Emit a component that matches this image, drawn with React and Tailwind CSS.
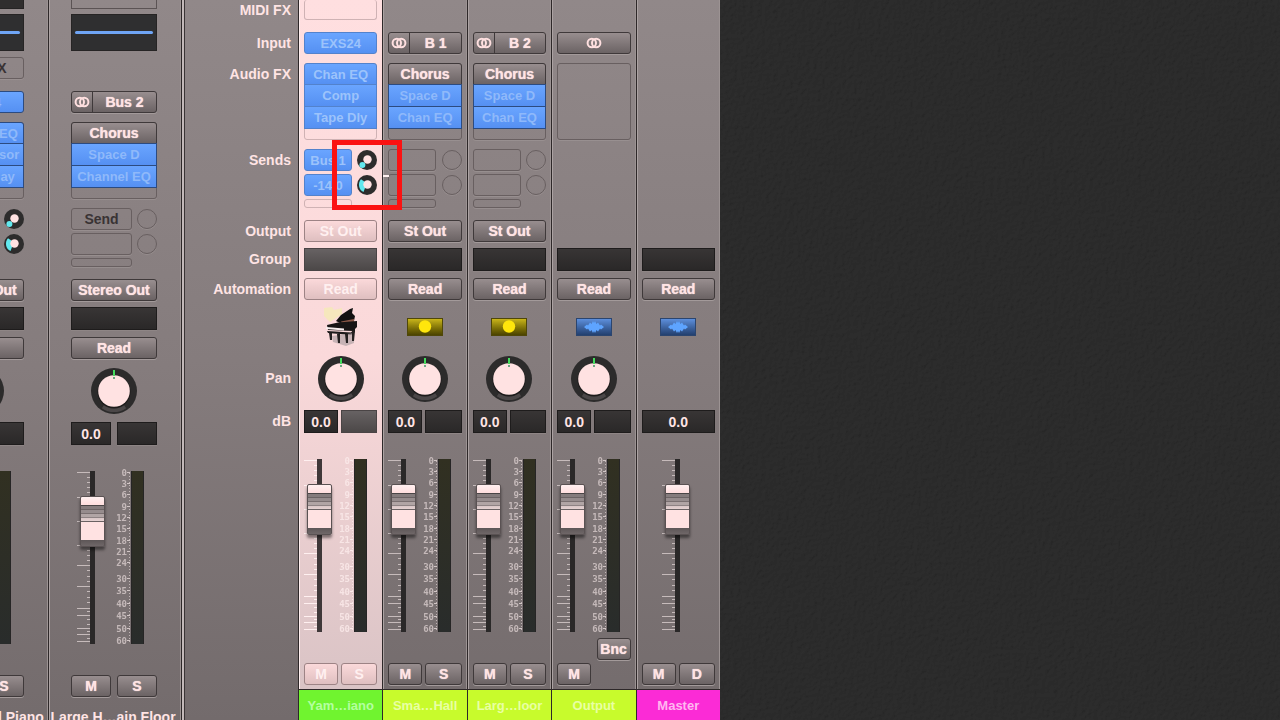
import clsx from 'clsx';

// --- DATA ---
const METER_MARKS = [
  ['0', 2], ['3', 13], ['6', 24], ['9', 36], ['12', 47], ['15', 58], ['18', 70], ['21', 81],
  ['24', 92], ['30', 108], ['35', 120], ['40', 133], ['45', 145], ['50', 158], ['60', 170],
];
const FADER_TICKS = [2, 27, 51, 75, 95, 116, 138, 145, 158, 164, 171];
const FADER_MINOR = [7, 12, 17, 22, 32, 37, 41, 46, 56, 61, 65, 70, 80, 85, 90, 100, 106, 111, 121, 127, 132, 141, 149, 154, 161, 168];

const SESSION = [
  {
    id: 'a1', wide: true, name: 'Yamaha G…l Piano', display: 'dark', midi: 'MIDI FX', input: 'EXS24', instrument: true,
    fx: ['Channel EQ', 'Compressor', 'Tape Delay'], sends: [{ label: 'Bus 1', amount: 1 }, { label: 'Bus 2', amount: 2 }],
    output: 'Stereo Out', pan: true, solo: 'S',
  },
  {
    id: 'a2', wide: true, name: 'Large H…ain Floor', input: 'Bus 2', stereo: true,
    fx: ['Chorus', 'Space D', 'Channel EQ'], firstPlain: true, sends: [{ label: 'Send' }, { label: '' }],
    output: 'Stereo Out', pan: true, solo: 'S',
  },
];

const MIXER = [
  {
    id: 'piano', name: 'Yam…iano', selected: true, midi: '', input: 'EXS24', instrument: true,
    fx: ['Chan EQ', 'Comp', 'Tape Dly'], sends: [{ label: 'Bus 1', amount: 1 }, { label: '-14.0', amount: 2 }],
    output: 'St Out', icon: 'piano', pan: true, solo: 'S', color: 'bg-[#70f42f]', nameColor: 'text-[#b4ffa0]', callout: true,
  },
  {
    id: 'hall', name: 'Sma…Hall', input: 'B 1', stereo: true, fx: ['Chorus', 'Space D', 'Chan EQ'], firstPlain: true,
    sends: [{ label: '' }, { label: '' }], output: 'St Out', icon: 'aux', pan: true, solo: 'S',
    color: 'bg-[#c8fb2c]', nameColor: 'text-[#e8ffa4]',
  },
  {
    id: 'floor', name: 'Larg…loor', input: 'B 2', stereo: true, fx: ['Chorus', 'Space D', 'Chan EQ'], firstPlain: true,
    sends: [{ label: '' }, { label: '' }], output: 'St Out', icon: 'aux', pan: true, solo: 'S',
    color: 'bg-[#c8fb2c]', nameColor: 'text-[#e8ffa4]',
  },
  {
    id: 'output', name: 'Output', input: '', stereo: true, fx: [], icon: 'wave', pan: true, bounce: true,
    color: 'bg-[#c8fb2c]', nameColor: 'text-[#e8ffa4]',
  },
  { id: 'master', name: 'Master', icon: 'wave', master: true, solo: 'D', color: 'bg-[#fb2bd6]', nameColor: 'text-[#ffb8f0]' },
];

// --- SMALL PARTS ---
function StereoIcon() {
  return (
    <svg width="16" height="12" viewBox="0 0 16 12" fill="none" stroke="#ffe0e0" strokeWidth="2">
      <circle cx="5.8" cy="6" r="4.2" />
      <circle cx="10.2" cy="6" r="4.2" />
    </svg>
  );
}

function PushButton({ selected, className, children, ...rest }) {
  return (
    <button
      type="button"
      className={clsx(
        'flex h-[22px] items-center justify-center overflow-hidden whitespace-nowrap rounded-[3px] border bg-gradient-to-b text-[14px] font-bold leading-none',
        selected
          ? 'border-[#9d8385] from-[#fbd9da] to-[#dfbfc0] text-[#fff0f0]'
          : 'border-[#3f393a] from-[#988e8f] to-[#6b6364] text-[#ffe4e4] shadow-[0_1px_0_#a39a9a] [text-shadow:0_0_1px_#ffe4e4]',
        className,
      )}
      {...rest}
    >
      {children}
    </button>
  );
}

function EmptySlot({ selected, className, children }) {
  return (
    <div
      className={clsx(
        'rounded-[3px] border',
        selected ? 'border-[#cfb2b4]' : 'border-[#685f60] shadow-[0_1px_0_#a0979799]',
        className,
      )}
    >
      {children}
    </div>
  );
}

function BlueButton({ selected, className, children }) {
  return (
    <button
      type="button"
      className={clsx(
        'flex items-center justify-center overflow-hidden whitespace-nowrap border bg-gradient-to-b from-[#6aa5ff] to-[#5590f2] text-[13px] font-bold leading-none',
        selected ? 'border-[#5382cc] text-[#9cc3fb]' : 'border-[#2c4b80] text-[#8fb9fa]',
        className,
      )}
    >
      {children}
    </button>
  );
}

function SendKnob({ amount, label }) {
  if (!amount) {
    return <div className="size-5 rounded-full border border-[#685f60] shadow-[0_1px_0_#a0979799]" />;
  }
  return (
    <label className="relative block size-5">
      <svg width="20" height="20" viewBox="0 0 20 20">
        <circle cx="10" cy="10" r="10" fill="#2d2c2c" />
        {amount === 1 ? (
          <circle cx="5.4" cy="15" r="3" fill="#62e8ee" />
        ) : (
          <path d="M6.5 17 C1.5 15 0.5 8 4 4.2 L8 7 L8 13 Z" fill="#62e8ee" />
        )}
        <circle cx="10.5" cy="9.5" r="4.2" fill="#ffe2e2" />
      </svg>
      <input type="range" aria-label={`${label} send level`} defaultValue={amount * 20} className="absolute inset-0 size-5 opacity-0" />
    </label>
  );
}

function PanKnob({ name }) {
  return (
    <label className="relative block size-[46px]">
      <svg width="46" height="46" viewBox="0 0 46 46">
        <circle cx="23" cy="23" r="23" fill="#2c2b2b" />
        <path d="M12 38.5 A19 19 0 0 0 34 38.5" fill="none" stroke="#4b4748" strokeWidth="4" />
        <circle cx="23" cy="24" r="16.5" fill="#1d1b1b" />
        <circle cx="23" cy="23" r="15.8" fill="#ffe2e2" />
        <rect x="22" y="2" width="2" height="6" fill="#45dc5d" />
        <circle cx="23" cy="10" r="1" fill="#3c9560" />
      </svg>
      <input type="range" aria-label={`${name} pan`} className="absolute inset-0 size-[46px] opacity-0" />
    </label>
  );
}

function PianoIcon() {
  return (
    <svg width="34" height="40" viewBox="0 0 34 40">
      <path d="M0 1 L8 0 L10 3 L18 1 L18 7 L6 15 L0 9 Z" fill="#f3edb0" opacity="0.7" />
      <path d="M12 14 L17 8 L26 2 L29 1 L28 6 L31 9 L30 14 L16 16 Z" fill="#121111" />
      <path d="M17 14.5 L30 12 L30 16 L19 17 Z" fill="#8a5848" />
      <path d="M3 18 L14 15.5 L33 14 L33 20 L29 24 L4 23 Z" fill="#171515" />
      <path d="M2 20 L20 21.5 L20 23.5 L2 22 Z" fill="#f7eeee" />
      <path d="M3 24 L27 25.5 L31 21 L31 25 L27 28 L4 26 Z" fill="#1c1a1a" />
      <path d="M8 29 L30 26 L30 36 L22 39 L9 35 Z" fill="#b5a6a8" opacity="0.75" />
      <path d="M5 26 L8 26 L8 33 L6 33 Z M13 27 L16 27 L16 36 L14 36 Z M21 27 L24 27 L24 36 L22 36 Z M28 24 L31 24 L30 34 L28 34 Z" fill="#242020" />
    </svg>
  );
}

function TrackIcon({ type }) {
  if (type === 'piano') return <PianoIcon />;
  const aux = type === 'aux';
  return (
    <div className={clsx('flex h-[18px] w-9 items-center justify-center border bg-gradient-to-b', aux ? 'border-[#4f4708] from-[#c9b51a] to-[#4b4300]' : 'border-[#2b456f] from-[#5d8fdc] to-[#23406f]')}>
      <svg width="22" height="14" viewBox="0 0 22 14">
        {aux ? (
          <circle cx="11" cy="6.5" r="6.2" fill="#ffe60c" />
        ) : (
          <path d="M1 7 L4 4.5 L5 5.5 L7 2.5 L8.5 4 L10 1 L11 3 L12 1 L13.5 4 L15 2.5 L17 5.5 L18 4.5 L21 7 L18 9.5 L17 8.5 L15 11.5 L13.5 10 L12 13 L11 11 L10 13 L8.5 10 L7 11.5 L5 8.5 L4 9.5 Z" fill="#5ea4ff" />
        )}
      </svg>
    </div>
  );
}

function DarkSlot({ selected, className }) {
  return (
    <div className={clsx('h-[23px] border bg-gradient-to-b', selected ? 'border-[#4a4445] from-[#676263] to-[#4c4848]' : 'border-[#1e1c1c] from-[#383535] to-[#2a2828] shadow-[0_1px_0_#8e8585]', className)} />
  );
}

function Fader({ name, selected }) {
  const line = selected ? '#fff0f0' : '#c6bbbb';
  return (
    <label className="relative flex h-[173px] w-7 shrink-0 justify-end">
      <svg className="absolute left-0 top-0" width="28" height="173" viewBox="0 0 28 173" shapeRendering="crispEdges">
        <rect x="13" y="0" width="5" height="173" fill={selected ? '#3f3839' : '#2a2828'} />
        {FADER_TICKS.map(y => <rect key={y} x="0" y={y - 1} width="13" height="1" fill={line} />)}
        {FADER_MINOR.map(y => <rect key={y} x="10" y={y - 1} width="3" height="1" fill={line} />)}
      </svg>
      <input
        type="range"
        min="0"
        max="122"
        defaultValue="97"
        aria-label={`${name} volume`}
        className="relative m-0 h-[173px] w-[25px] appearance-none bg-transparent [direction:rtl] [writing-mode:vertical-lr] [&::-webkit-slider-thumb]:h-[51px] [&::-webkit-slider-thumb]:w-[25px] [&::-webkit-slider-thumb]:appearance-none [&::-webkit-slider-thumb]:rounded-[2px] [&::-webkit-slider-thumb]:border [&::-webkit-slider-thumb]:border-[#5a5253] [&::-webkit-slider-thumb]:bg-[linear-gradient(to_bottom,#fff0f0_0px,#ffdede_8px,#4a4546_8px,#4a4546_9px,#857c7d_9px,#857c7d_12px,#6c6465_12px,#6c6465_13px,#968c8d_13px,#968c8d_16px,#796f70_16px,#796f70_17px,#b1a5a5_17px,#b1a5a5_20px,#8e8384_20px,#8e8384_21px,#d8c6c6_21px,#e6d2d2_24px,#6a6263_24px,#6a6263_25px,#ffe2e2_25px,#ffe2e2_43px,#5d5657_43px,#6f6768_49px)] [&::-webkit-slider-thumb]:shadow-[0_3px_3px_#00000077]"
      />
    </label>
  );
}

function Meter({ wide, selected }) {
  const color = selected ? '#fbeaea' : '#d2c6c6';
  return (
    <div className={clsx('flex h-[173px]', wide ? 'ml-2' : 'ml-1')}>
      <svg width="18" height="173" viewBox="0 0 18 173" className="overflow-visible">
        {METER_MARKS.map(([label, y]) => (
          <g key={label}>
            <text x="14" y={y + 3} textAnchor="end" fontSize="9" fontWeight="bold" fontFamily="'DejaVu Sans Mono', monospace" fill={color} opacity="0.85">{label}</text>
            <rect x="14" y={y - 1} width="3" height="1" fill={color} />
          </g>
        ))}
        <path d="M16.5 2 V172" stroke={color} strokeDasharray="1 2" opacity="0.8" />
      </svg>
      <div className="w-[13px] border-x border-[#262525] bg-gradient-to-b from-[#313021] to-[#292c2b]" />
    </div>
  );
}

// --- CHANNEL STRIP ---
function Strip({ ch }) {
  const { selected, wide } = ch;
  return (
    <section
      aria-label={ch.name}
      className={clsx(
        'flex shrink-0 flex-col border-l border-[#2e2829] bg-gradient-to-b',
        wide ? 'w-[133px]' : 'min-w-0',
        selected
          ? 'from-[#ffdfe0] via-[#fad9da] to-[#d6c1c3] shadow-[inset_1px_0_0_#fff0f0]'
          : 'from-[#918889] via-[#857c7d] to-[#736b6c] shadow-[inset_1px_0_0_#aca3a3,inset_-1px_0_0_#9c9393]',
      )}
    >
      <div className={clsx('flex flex-col', wide ? 'pl-[22px] pr-6' : 'px-[5px]')}>
        {wide && (
          <>
            <div className="h-[14px]">
              <div className={clsx('h-[9px] border border-t-0', ch.display ? 'border-[#262424] bg-[#302e2e]' : 'border-[#5b5354]')} />
            </div>
            <div className="h-[43px]">
              <div className="flex h-[37px] items-center border border-[#262424] bg-[#2f2f30] px-[3px]">
                <div className="h-[3px] w-full rounded-full bg-[#6fa5f5]" />
              </div>
            </div>
          </>
        )}

        <div className={wide ? 'h-[34px]' : 'h-8'}>
          {ch.midi !== undefined && (
            <EmptySlot selected={selected} className={clsx('flex items-center justify-center text-[14px] font-bold text-[#393334]', wide ? 'h-[22px]' : 'h-5 border-t-0')}>
              {ch.midi}
            </EmptySlot>
          )}
        </div>

        <div className="h-[31px]">
          {ch.instrument && <BlueButton selected={selected} className="h-[22px] w-full rounded-[3px]">{ch.input}</BlueButton>}
          {ch.stereo && (
            <PushButton className="w-full" aria-label={`${ch.name} input ${ch.input}`}>
              {ch.input ? (
                <>
                  <span className="flex h-full w-[21px] items-center justify-center border-r border-[#3f393a]"><StereoIcon /></span>
                  <span className="flex-1">{ch.input}</span>
                </>
              ) : (
                <StereoIcon />
              )}
            </PushButton>
          )}
        </div>

        <div className="h-[86px]">
          {ch.fx && (
            <EmptySlot selected={selected} className="h-[77px]">
              <div className="-mx-px -mt-px flex flex-col">
                {ch.fx.map((fx, i) =>
                  i === 0 && ch.firstPlain ? (
                    <PushButton key={fx} className="rounded-b-none">{fx}</PushButton>
                  ) : (
                    <BlueButton key={fx} selected={selected} className={clsx('h-[22px]', i === 0 ? 'rounded-t-[3px]' : '-mt-px h-[23px]')}>{fx}</BlueButton>
                  ),
                )}
              </div>
            </EmptySlot>
          )}
        </div>

        <div className="relative h-[71px]">
          {ch.sends && (
            <div className="flex flex-col gap-[3px]">
              {ch.sends.map((send, i) => (
                <div key={i} className="flex items-center justify-between">
                  {send.amount ? (
                    <BlueButton selected={selected} className={clsx('h-[22px] rounded-[3px]', wide ? 'w-[61px]' : 'w-12')}>{send.label}</BlueButton>
                  ) : (
                    <EmptySlot className={clsx('flex h-[22px] items-center justify-center text-[14px] font-bold text-[#393334]', wide ? 'w-[61px]' : 'w-12')}>{send.label}</EmptySlot>
                  )}
                  <SendKnob amount={send.amount} label={send.label} />
                </div>
              ))}
              <EmptySlot selected={selected} className={clsx('h-[9px]', wide ? 'w-[61px]' : 'w-12')} />
            </div>
          )}
          {ch.callout && (
            <>
              <div className="absolute -top-[9px] left-7 z-10 size-[70px] border-[5px] border-[#fb1212]" />
              <div className="absolute left-[79px] top-[26px] z-10 h-[2px] w-[6px] bg-[#fff0f0]" />
            </>
          )}
        </div>

        <div className="h-7">
          {ch.output && <PushButton selected={selected} className="w-full">{ch.output}</PushButton>}
        </div>
        <div className="h-[30px]"><DarkSlot selected={selected} /></div>
        <div className="h-7"><PushButton selected={selected} className="w-full">Read</PushButton></div>

        {!wide && (
          <div className="flex h-12 items-start justify-center">
            <div className="flex h-[42px] items-center"><TrackIcon type={ch.icon} /></div>
          </div>
        )}

        <div className={clsx('flex items-end justify-center pb-2', wide ? 'h-[57px]' : 'h-14')}>
          {ch.pan && <PanKnob name={ch.name} />}
        </div>

        <div className="flex h-[49px] items-start gap-[3px]">
          <input
            type="text"
            defaultValue="0.0"
            aria-label={`${ch.name} dB`}
            className={clsx(
              'h-[23px] min-w-0 border border-[#1e1c1c] bg-gradient-to-b from-[#383535] to-[#2a2828] p-0 text-center text-[14px] font-bold text-[#ffe4e4]',
              ch.master ? 'w-full' : wide ? 'w-10' : 'w-[34px]',
            )}
          />
          {!ch.master && <DarkSlot selected={selected} className={clsx('flex-1', wide && 'ml-[3px]')} />}
        </div>

        <div className={clsx('flex h-[179px]', wide && 'pl-1.5', ch.master && 'pl-5')}>
          <Fader name={ch.name} selected={selected} />
          {!ch.master && <Meter wide={wide} selected={selected} />}
        </div>

        <div className="flex h-[25px] justify-end">
          {ch.bounce && <PushButton className="w-[34px]">Bnc</PushButton>}
        </div>
        <div className={clsx('flex h-[26px] gap-[3px]', wide && 'justify-between')}>
          <PushButton selected={selected} className={wide ? 'w-10' : 'w-[34px]'} aria-label={`Mute ${ch.name}`}>M</PushButton>
          {ch.solo && <PushButton selected={selected} className={wide ? 'w-10' : 'flex-1'}>{ch.solo}</PushButton>}
        </div>
      </div>

      <div
        className={clsx(
          'flex h-8 items-center justify-center overflow-hidden whitespace-nowrap font-bold',
          wide ? 'pr-1 text-[14px] text-[#ffe4e4]' : 'border-t border-[#2e2829] text-[13px]',
          ch.color,
          ch.nameColor,
        )}
      >
        {ch.name}
      </div>
    </section>
  );
}

// --- ROW LABELS ---
function Labels() {
  return (
    <div className="flex w-[114px] shrink-0 flex-col border-l border-[#3a3435] bg-gradient-to-b from-[#918889] via-[#857c7d] to-[#736b6c] pr-[7px] text-right text-[14px] font-bold leading-[22px] text-[#ffe4e4]">
      <div className="h-8 leading-5">MIDI FX</div>
      <div className="h-[31px]">Input</div>
      <div className="h-[86px]">Audio FX</div>
      <div className="h-[71px]">Sends</div>
      <div className="h-7">Output</div>
      <div className="h-[30px]">Group</div>
      <div className="h-[76px]">Automation</div>
      <div className="h-14 leading-[48px]">Pan</div>
      <div className="h-[49px]">dB</div>
    </div>
  );
}

// Dark leather filling the rest of the window
function Leather() {
  return (
    <div className="min-w-0 flex-1 self-stretch overflow-hidden bg-[#2a2a2a]">
      <svg width="100%" height="100%" className="block opacity-50" aria-hidden="true">
        <filter id="leather" x="0" y="0" width="100%" height="100%">
          <feTurbulence type="fractalNoise" baseFrequency="0.25" numOctaves="2" seed="4" />
          <feDiffuseLighting lightingColor="#303030" surfaceScale="0.8">
            <feDistantLight azimuth="225" elevation="55" />
          </feDiffuseLighting>
        </filter>
        <rect width="100%" height="100%" filter="url(#leather)" />
      </svg>
    </div>
  );
}

function App() {
  return (
    <main className="flex h-screen overflow-hidden bg-[#292929] font-['Liberation_Sans',Arial,sans-serif]">
      <div className="flex shrink-0 items-start">
        <div className="flex w-12 shrink-0 justify-end overflow-hidden"><Strip ch={SESSION[0]} /></div>
        <Strip ch={SESSION[1]} />
      </div>
      <div className="w-[3px] shrink-0 border-l border-[#2e2829] bg-[#c3b9b9]" />
      <Labels />
      <div className="grid w-[422px] shrink-0 grid-cols-5 items-start">
        {MIXER.map(ch => <Strip key={ch.id} ch={ch} />)}
      </div>
      <Leather />
    </main>
  );
}

export default App;
